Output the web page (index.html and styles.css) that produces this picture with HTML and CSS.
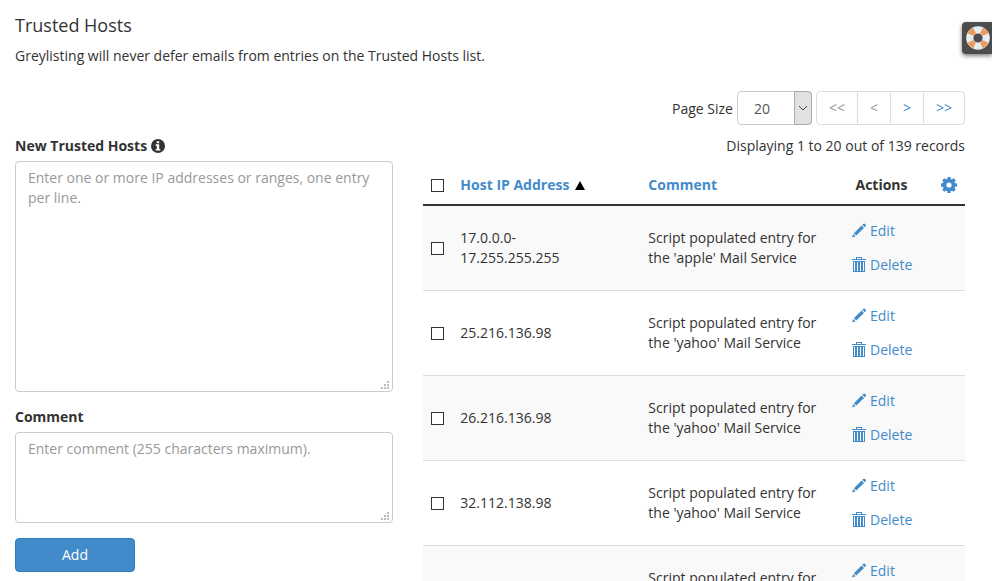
FILE: index.html
```html
<!DOCTYPE html>
<html lang="en">
<head>
  <meta charset="UTF-8">
  <meta name="viewport" content="width=device-width, initial-scale=1.0">
  <title>Trusted Hosts</title>
  <link rel="stylesheet" href="styles.css">
</head>
<body>

  <!-- shared icons -->
  <svg class="sprite" aria-hidden="true">
    <symbol id="icon-pencil" viewBox="0 0 14 14">
      <path d="M10.3 1.3 11.2.4a1.3 1.3 0 0 1 1.8 0l.6.6a1.3 1.3 0 0 1 0 1.8l-.9.9zM9.6 2l2.4 2.4-7.7 7.7-2.4-2.4zM1.3 10.4l2.3 2.3L0 14z"/>
    </symbol>
    <symbol id="icon-trash" viewBox="0 0 14 15">
      <path d="M0 2h14v1H0zM4 2V0h6v2H9V1H5v1zM1 4h12v11H1zm1 1v9h1V5zm3 0v9h1V5zm3 0v9h1V5zm3 0v9h1V5z" fill-rule="evenodd"/>
    </symbol>
  </svg>

  <main class="page">
    <h4>Trusted Hosts</h4>
    <p class="intro">Greylisting will never defer emails from entries on the Trusted Hosts list.</p>

    <div class="row">
      <form class="new_hosts">
        <label for="hosts">New Trusted Hosts
          <svg class="icon_info" viewBox="0 0 14 14" aria-hidden="true">
            <circle cx="7" cy="7" r="7" fill="#333"/>
            <path d="M5.7 2.3h2.5v2H5.7zM4.7 5.3h3.5v4.6h1.1v1.6H4.7V9.9h1.1V6.9H4.7z" fill="#fff"/>
          </svg>
        </label>
        <textarea id="hosts" class="form_control hosts_box" placeholder="Enter one or more IP addresses or ranges, one entry per line."></textarea>

        <label for="comment">Comment</label>
        <textarea id="comment" class="form_control comment_box" maxlength="255" placeholder="Enter comment (255 characters maximum)."></textarea>

        <button type="button" class="btn_primary">Add</button>
      </form>

      <section class="host_list">
        <div class="toolbar">
          <label for="pageSize">Page Size</label>
          <div class="select_box">
            <select id="pageSize">
              <option>20</option>
              <option>50</option>
              <option>100</option>
            </select>
            <span class="select_arrow">
              <svg viewBox="0 0 10 6" aria-hidden="true"><path d="M1 1l4 4 4-4" fill="none" stroke="#444"/></svg>
            </span>
          </div>
          <nav class="pagination" aria-label="Pages">
            <button type="button" disabled>&lt;&lt;</button>
            <button type="button" disabled>&lt;</button>
            <button type="button">&gt;</button>
            <button type="button">&gt;&gt;</button>
          </nav>
        </div>
        <div class="records">Displaying 1 to 20 out of 139 records</div>

        <table>
          <colgroup>
            <col class="col_check">
            <col class="col_ip">
            <col>
            <col class="col_actions">
            <col class="col_gear">
          </colgroup>
          <thead>
            <tr>
              <th><input type="checkbox" aria-label="Select all"></th>
              <th><a href="#">Host IP Address</a>
                <svg class="icon_sort" viewBox="0 0 10 9" aria-hidden="true"><path d="M5 0l5 9H0z"/></svg>
              </th>
              <th><a href="#">Comment</a></th>
              <th class="center">Actions</th>
              <th>
                <button type="button" class="btn_gear" aria-label="Settings">
                  <svg viewBox="-8 -8 16 16" aria-hidden="true">
                    <g fill="#428bca">
                      <rect x="-1.7" y="-8" width="3.4" height="16" rx=".6"/>
                      <rect x="-1.7" y="-8" width="3.4" height="16" rx=".6" transform="rotate(45)"/>
                      <rect x="-1.7" y="-8" width="3.4" height="16" rx=".6" transform="rotate(90)"/>
                      <rect x="-1.7" y="-8" width="3.4" height="16" rx=".6" transform="rotate(135)"/>
                      <circle r="6.3"/>
                    </g>
                    <circle r="2.6" fill="#fff"/>
                  </svg>
                </button>
              </th>
            </tr>
          </thead>
          <tbody>
            <tr>
              <td><input type="checkbox" aria-label="Select host"></td>
              <td>17.0.0.0-<br>17.255.255.255</td>
              <td>Script populated entry for the 'apple' Mail Service</td>
              <td colspan="2">
                <button type="button" class="btn_link"><svg><use href="#icon-pencil"/></svg>Edit</button>
                <button type="button" class="btn_link"><svg><use href="#icon-trash"/></svg>Delete</button>
              </td>
            </tr>
            <tr>
              <td><input type="checkbox" aria-label="Select host"></td>
              <td>25.216.136.98</td>
              <td>Script populated entry for the 'yahoo' Mail Service</td>
              <td colspan="2">
                <button type="button" class="btn_link"><svg><use href="#icon-pencil"/></svg>Edit</button>
                <button type="button" class="btn_link"><svg><use href="#icon-trash"/></svg>Delete</button>
              </td>
            </tr>
            <tr>
              <td><input type="checkbox" aria-label="Select host"></td>
              <td>26.216.136.98</td>
              <td>Script populated entry for the 'yahoo' Mail Service</td>
              <td colspan="2">
                <button type="button" class="btn_link"><svg><use href="#icon-pencil"/></svg>Edit</button>
                <button type="button" class="btn_link"><svg><use href="#icon-trash"/></svg>Delete</button>
              </td>
            </tr>
            <tr>
              <td><input type="checkbox" aria-label="Select host"></td>
              <td>32.112.138.98</td>
              <td>Script populated entry for the 'yahoo' Mail Service</td>
              <td colspan="2">
                <button type="button" class="btn_link"><svg><use href="#icon-pencil"/></svg>Edit</button>
                <button type="button" class="btn_link"><svg><use href="#icon-trash"/></svg>Delete</button>
              </td>
            </tr>
            <tr>
              <td><input type="checkbox" aria-label="Select host"></td>
              <td></td>
              <td>Script populated entry for the 'yahoo' Mail Service</td>
              <td colspan="2">
                <button type="button" class="btn_link"><svg><use href="#icon-pencil"/></svg>Edit</button>
                <button type="button" class="btn_link"><svg><use href="#icon-trash"/></svg>Delete</button>
              </td>
            </tr>
          </tbody>
        </table>
      </section>
    </div>
  </main>

  <button type="button" class="support" aria-label="Support">
    <svg viewBox="-12 -12 24 24" aria-hidden="true">
      <circle r="8.2" fill="none" stroke="#e4eff5" stroke-width="7.2"/>
      <!-- orange quarters between the white bands -->
      <circle r="8.2" fill="none" stroke="#ee9a5e" stroke-width="6.6" pathLength="80" stroke-dasharray="9 11" stroke-dashoffset="-5.5"/>
    </svg>
  </button>

</body>
</html>
```
FILE: styles.css
```css
* {
  box-sizing: border-box;
}

body {
  margin: 0;
  height: 100vh;
  overflow-y: auto;
  scrollbar-width: none;
  background-color: #fff;
  color: #333;
  font-family: "Open Sans", sans-serif;
  font-size: 14px;
  line-height: 20px;
}

button, select, textarea {
  font: inherit;
}

button {
  cursor: pointer;
}

a {
  color: #428bca;
  text-decoration: none;
}

.sprite {
  display: none;
}

.page {
  padding: 15px 27px 20px 15px;
}

h4 {
  margin: 0 0 11px;
  font-size: 18px;
  font-weight: 400;
  line-height: 20px;
}

.intro {
  margin: 0 0 25px;
}

.row {
  display: grid;
  grid-template-columns: repeat(12, 1fr);
  gap: 30px;
}

/* left column */
.new_hosts {
  grid-column: span 5;
  padding-top: 45px;
}

.new_hosts label {
  display: block;
  margin-bottom: 5px;
  font-weight: 700;
}

.icon_info {
  width: 14px;
  height: 14px;
  vertical-align: -2px;
}

.form_control {
  display: block;
  width: 100%;
  margin: 0 0 15px;
  padding: 6px 12px;
  border: 1px solid #ccc;
  border-radius: 4px;
  color: #555;
  resize: vertical;
}

.form_control::placeholder {
  color: #999;
}

.form_control::-webkit-resizer {
  background: url("data:image/svg+xml,%3Csvg xmlns='http://www.w3.org/2000/svg' width='15' height='15' fill='%23bbb'%3E%3Cpath d='M10 5h2v2h-2zM7 8h2v2H7zM10 8h2v2h-2zM4 11h2v2H4zM7 11h2v2H7zM10 11h2v2h-2z'/%3E%3C/svg%3E") no-repeat;
}

.hosts_box {
  height: 231px;
}

.comment_box {
  height: 91px;
}

.btn_primary {
  min-width: 120px;
  padding: 6px 12px;
  border: 1px solid #357ebd;
  border-radius: 4px;
  background-color: #428bca;
  color: #fff;
}

/* right column */
.host_list {
  grid-column: span 7;
}

.toolbar {
  display: flex;
  justify-content: flex-end;
  align-items: center;
  gap: 4px;
}

.select_box {
  position: relative;
}

.select_box select {
  appearance: none;
  display: block;
  width: 75px;
  height: 34px;
  padding: 1px 16px 0;
  border: 1px solid #ccc;
  border-radius: 4px;
  background-color: #fff;
  color: #555;
}

.select_arrow {
  position: absolute;
  top: 0;
  right: 0;
  bottom: 0;
  width: 18px;
  display: flex;
  align-items: center;
  justify-content: center;
  border: 1px solid #aaa;
  border-radius: 0 4px 4px 0;
  background-color: #e1e1e1;
  pointer-events: none;
}

.select_arrow svg {
  width: 10px;
  height: 6px;
}

.toolbar label {
  padding-top: 2px;
}

.pagination {
  display: flex;
}

.pagination button {
  height: 34px;
  margin-left: -1px;
  padding: 0 12px;
  border: 1px solid #ddd;
  background-color: #fff;
  color: #428bca;
}

.pagination button:first-child {
  margin-left: 0;
  border-radius: 4px 0 0 4px;
}

.pagination button:last-child {
  border-radius: 0 4px 4px 0;
}

.pagination button:disabled {
  color: #999;
  cursor: default;
}

.records {
  margin: 11px 0;
  text-align: right;
}

table {
  width: 100%;
  table-layout: fixed;
  border-collapse: separate;
  border-spacing: 0;
}

.col_check {
  width: 29px;
}

.col_ip {
  width: 188px;
}

.col_actions {
  width: 101px;
}

.col_gear {
  width: 32px;
}

th, td {
  padding: 8px;
  text-align: left;
  vertical-align: middle;
}

th {
  padding-bottom: 9px;
  border-bottom: 2px solid #333;
  font-weight: 700;
}

.center {
  padding-right: 10px;
  text-align: center;
}

td {
  border-bottom: 1px solid #ddd;
}

tbody tr:nth-child(odd) {
  background-color: #f9f9f9;
}

input[type="checkbox"] {
  appearance: none;
  display: block;
  width: 13px;
  height: 13px;
  margin: 0;
  border: 1px solid #333;
  background-color: #fff;
}

input[type="checkbox"]:checked {
  background-color: #428bca;
}

.icon_sort {
  width: 10px;
  height: 9px;
  margin-left: 2px;
}

.btn_gear {
  display: block;
  padding: 0;
  border: 0;
  background: none;
}

.btn_gear svg {
  display: block;
  width: 16px;
  height: 16px;
}

.btn_link {
  display: flex;
  align-items: center;
  gap: 4px;
  padding: 7px 12px;
  border: 0;
  background: none;
  color: #428bca;
}

.btn_link svg {
  width: 14px;
  height: 15px;
  margin-bottom: 2px;
  fill: #428bca;
}

/* help tab on the window's edge */
.support {
  position: fixed;
  top: 22px;
  right: 0;
  padding: 4px 2px 4px 4px;
  border: 0;
  border-radius: 4px 0 0 4px;
  background-color: #4c4c4c;
  box-shadow: 0 2px 4px rgba(0, 0, 0, 0.5);
}

.support svg {
  display: block;
  width: 24px;
  height: 24px;
}
```
